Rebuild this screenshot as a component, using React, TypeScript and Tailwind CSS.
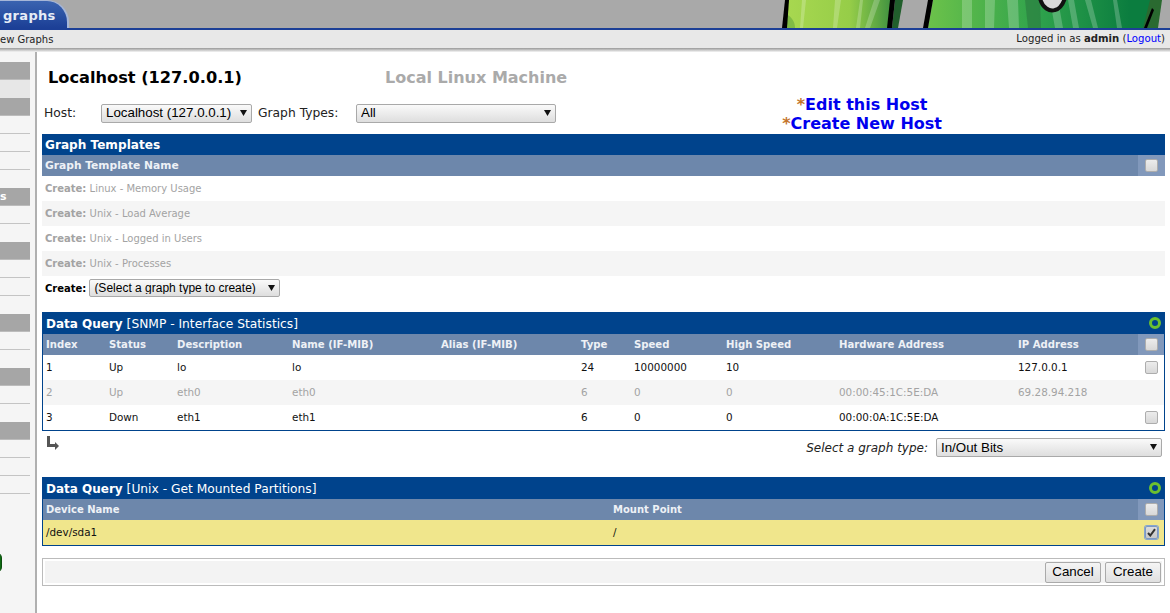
const D = '"DejaVu Sans", Verdana, sans-serif';

function Sel({ text, w, h = 'h-[19px]', tx = 'text-[13.33px]' }: { text: string; w: string; h?: string; tx?: string }) {
  return (
    <div className={`relative ${w} ${h} shrink-0`}>
      <select
        defaultValue={text}
        className={`w-full h-full appearance-none rounded-[2px] border border-[#a9a9a9] bg-gradient-to-b from-[#fafafa] to-[#dedede] pl-[4px] text-black ${tx} leading-none [font-family:'Liberation_Sans',Arial,sans-serif]`}
      >
        <option>{text}</option>
      </select>
      <svg className="absolute right-[5px] top-[6px] pointer-events-none" width="7" height="6" viewBox="0 0 7 6">
        <path d="M0 0h7L3.5 6z" fill="#111" />
      </svg>
    </div>
  );
}

function Check({ checked = false, off = false }: { checked?: boolean; off?: boolean }) {
  if (off) return null;
  return (
    <span
      className={`relative block w-[13px] h-[13px] rounded-[2px] border bg-gradient-to-b ${
        checked
          ? 'from-[#dcdcdc] to-[#c8c8c8] border-[#7b98c4] shadow-[0_0_0_1px_#86a5cf]'
          : 'from-[#ececec] to-[#d8d8d8] border-[#adadad]'
      }`}
    >
      {checked && (
        <svg className="absolute left-[1px] top-[1px]" width="9" height="9" viewBox="0 0 9 9">
          <path d="M1 5l2.3 2.5L8 1.2" fill="none" stroke="#333" strokeWidth="2" />
        </svg>
      )}
    </span>
  );
}

function Spinner() {
  return <span className="block w-[12px] h-[12px] rounded-full border-[3px] border-[#6cc02f] bg-[#00438c]" />;
}

const COLS = 'grid-cols-[63px_68px_115px_149px_140px_53px_92px_113px_179px_1fr_26px]';
const heads = ['Index', 'Status', 'Description', 'Name (IF-MIB)', 'Alias (IF-MIB)', 'Type', 'Speed', 'High Speed', 'Hardware Address', 'IP Address'];
const rows = [
  { c: ['1', 'Up', 'lo', 'lo', '', '24', '10000000', '10', '', '127.0.0.1'], off: false, bg: 'bg-white' },
  { c: ['2', 'Up', 'eth0', 'eth0', '', '6', '0', '0', '00:00:45:1C:5E:DA', '69.28.94.218'], off: true, bg: 'bg-[#f5f5f5]' },
  { c: ['3', 'Down', 'eth1', 'eth1', '', '6', '0', '0', '00:00:0A:1C:5E:DA', ''], off: false, bg: 'bg-white' },
];
const templates = ['Linux - Memory Usage', 'Unix - Load Average', 'Unix - Logged in Users', 'Unix - Processes'];

function SideRow({ kind, label }: { kind: 'gray' | 'light' | 'line' | 'blank'; label?: string }) {
  const cls =
    kind === 'gray'
      ? 'bg-[#a6a6a6] border-b border-[#bcbcbc] text-white font-bold'
      : kind === 'light'
      ? 'bg-[#e7e7e7]'
      : kind === 'line'
      ? 'border-b border-[#c4c4c4]'
      : '';
  return <div className={`h-[18px] w-[30px] text-[11px] leading-[17px] ${cls}`}>{label}</div>;
}

function Cactus() {
  return (
    <svg className="absolute left-[780px] top-0" width="390" height="28" viewBox="0 0 390 28">
      <defs>
        <linearGradient id="l" x1="0" x2="1" y1="0" y2="0">
          <stop offset="0" stopColor="#a8d850" />
          <stop offset="0.6" stopColor="#96cd48" />
          <stop offset="0.8" stopColor="#6cb245" />
          <stop offset="1" stopColor="#3f9040" />
        </linearGradient>
        <linearGradient id="r" x1="0" x2="1" y1="0" y2="0">
          <stop offset="0" stopColor="#6cc24a" />
          <stop offset="0.5" stopColor="#2ea24c" />
          <stop offset="0.9" stopColor="#0b7d3f" />
        </linearGradient>
      </defs>
      <path d="M8 0H112L109 28H6z" fill="url(#l)" />
      <path d="M6 14c6 3 9 8 9 14H6z" fill="#7fbb45" />
      <path d="M22 0h4l-3 28h-3zM55 0h6l-4 28h-4zM80 0h3l-3 28h-4zM94 0h6l-10 28h-5z" fill="#ffffff" opacity="0.22" />
      <path d="M5 0h4L7 28H2z" fill="#000" />
      <path d="M115 0h8l-5 28h-6z" fill="#215f2c" />
      <path d="M110 0h5l-3 28h-5z" fill="#000" />
      <path d="M153 0H372L365 28H148z" fill="url(#r)" />
      <path d="M148 0h5l-5 28h-5z" fill="#000" />
      <path d="M182 0h10v28h-10zM205 0h10l-1 28h-9zM227 0h11l1 28h-10zM270 0h8l5 28h-8zM288 0h6l5 28h-6zM305 0h6l7 28h-5zM333 0h4l5 28h-5z" fill="#fff" opacity="0.22" />
      <path d="M245 0h15l1 28h-13z" fill="#2c7f42" opacity="0.7" />
      <path d="M370 0h12l-4 28H363z" fill="#2a6a30" />
      <path d="M372 8l2 2-7 18h-3z" fill="#000" />
      <path d="M260 -2C262 8 270 12 275 10C280 9 283 4 285 -2" fill="#d8d8d8" stroke="#111" strokeWidth="4" />
    </svg>
  );
}

export default function App() {
  return (
    <div className="w-[1170px] h-[613px] overflow-hidden bg-white text-[11px] text-black" style={{ fontFamily: D }}>
      <div className="relative h-[28px] bg-[#a9a9a9]">
        <div className="absolute left-0 top-0 w-[69px] h-[28px] rounded-tr-[22px] bg-gradient-to-b from-[#3a63b0] to-[#1c3f96] border-t border-r-2 border-[#a5b6d8] flex items-center pl-[3px] pt-[2px] text-[13px] font-bold text-[#e6ecf7] tracking-[0.3px]">
          graphs
        </div>
        <Cactus />
      </div>
      <div className="h-[2px] bg-[#1c3f96]" />
      <div className="h-[18px] bg-[#e8e8e8] flex justify-between items-center pr-[5px] text-[#222] overflow-hidden">
        <span className="text-[10px]">ew Graphs</span>
        <span className="text-[10.15px]">
          Logged in as <b>admin</b> (<span className="text-[#0000ff]">Logout</span>)
        </span>
      </div>
      <div className="h-[4px] bg-gradient-to-b from-[#999] to-[#f5f5f5]" />
      <div className="flex h-[561px]">
        <div className="w-[37px] shrink-0 bg-[#f5f5f5] border-r-2 border-[#b0b0b0] pt-[10px] relative">
          {(
            [
              'gray', 'light', 'gray', 'line', 'line', 'line', 'blank', 'gray', 'line', 'blank', 'gray', 'line', 'line', 'blank',
              'gray', 'line', 'blank', 'gray', 'line', 'blank', 'gray', 'line', 'line', 'line',
            ] as const
          ).map((k, i) => (
            <SideRow key={i} kind={k} label={i === 7 ? 's' : undefined} />
          ))}
          <div className="absolute left-[-10px] top-[500px] w-[12px] h-[21px] rounded-full bg-[#0f6b13] border border-[#0b4d0e]" />
        </div>
        <div className="flex-1 min-w-0 pl-[5px] pr-[5px]">
          <div className="flex items-center h-[32px] mt-[10px] pl-[6px] font-bold">
            <span className="w-[337px] text-[16.2px]">Localhost (127.0.0.1)</span>
            <span className="text-[#aaaaaa] text-[16px]">Local Linux Machine</span>
          </div>
          <div className="relative flex items-center h-[20px] mt-[9px] pl-[2px] text-[12.3px] text-[#222]">
            <span className="w-[57px]">Host:</span>
            <Sel text="Localhost (127.0.0.1)" w="w-[151px]" />
            <span className="ml-[6px] w-[98px]">Graph Types:</span>
            <Sel text="All" w="w-[200px]" />
            <div className="absolute right-[223px] top-[-8px] text-right font-bold text-[16px] leading-[19px] flex flex-col items-center text-[#0000ee]">
              <span><span className="text-[#c4752c]">*</span>Edit this Host</span>
              <span><span className="text-[#c4752c]">*</span>Create New Host</span>
            </div>
          </div>

          <div className="mt-[11px]">
            <div className="h-[21px] bg-[#00438c] text-white font-bold text-[12.1px] leading-[22px] pl-[3px]">Graph Templates</div>
            <div className="h-[21px] bg-[#6d87ab] flex justify-between text-white font-bold text-[10.7px] leading-[21px] pl-[3px]">
              <span className="text-[#eef1f6]">Graph Template Name</span>
              <span className="w-[27px] h-full bg-[#8198bb] flex items-center justify-center">
                <Check />
              </span>
            </div>
            {templates.map((t, i) => (
              <div key={t} className={`h-[25px] leading-[25px] pl-[3px] text-[10px] text-[#a3a3a3] ${i % 2 ? 'bg-[#f5f5f5]' : 'bg-white'}`}>
                <b>Create:</b> {t}
              </div>
            ))}
            <div className="flex items-center h-[24px] pl-[3px] gap-[3px]">
              <b className="text-[10px]">Create:</b>
              <Sel text="(Select a graph type to create)" w="w-[191px]" h="h-[18px]" tx="text-[12px]" />
            </div>
          </div>

          <div className="mt-[12px] border border-t-0 border-[#00438c]">
            <div className="h-[22px] bg-[#00438c] text-white text-[12.25px] pl-[3px] flex items-center justify-between pr-[3px]">
              <span className="pt-[2px]"><b className="text-[12px]">Data Query</b> [SNMP - Interface Statistics]</span>
              <Spinner />
            </div>
            <div className={`grid ${COLS} h-[21px] bg-[#6d87ab] text-[#eef1f6] font-bold text-[10.1px] leading-[21px]`}>
              {heads.map(h => (
                <span key={h} className="pl-[3px] whitespace-nowrap">{h}</span>
              ))}
              <span className="bg-[#8198bb] flex items-center justify-center"><Check /></span>
            </div>
            {rows.map(r => (
              <div key={r.c[0]} className={`grid ${COLS} h-[25px] leading-[25px] text-[10.4px] ${r.bg} ${r.off ? 'text-[#a3a3a3]' : 'text-[#111]'}`}>
                {r.c.map((v, i) => (
                  <span key={i} className="pl-[3px] whitespace-nowrap">{v}</span>
                ))}
                <span className="flex items-center justify-center"><Check off={r.off} /></span>
              </div>
            ))}
          </div>

          <div className="flex justify-between h-[46px] pt-[7px] pl-[5px] pr-[3px]">
            <svg className="mt-[-2px]" width="12" height="14" viewBox="0 0 12 14">
              <path d="M0 0h3v8h5V6l4 4-4 4v-3H0z" fill="#555" />
            </svg>
            <div className="flex items-center h-[19px] gap-[8px]">
              <i className="text-[12px] text-[#222]">Select a graph type:</i>
              <Sel text="In/Out Bits" w="w-[226px]" />
            </div>
          </div>

          <div className="border border-t-0 border-[#00438c]">
            <div className="h-[22px] bg-[#00438c] text-white text-[12.25px] pl-[3px] flex items-center justify-between pr-[3px]">
              <span className="pt-[2px]"><b className="text-[12px]">Data Query</b> [Unix - Get Mounted Partitions]</span>
              <Spinner />
            </div>
            <div className="grid grid-cols-[567px_1fr_26px] h-[21px] bg-[#6d87ab] text-[#eef1f6] font-bold text-[10px] leading-[21px]">
              <span className="pl-[3px]">Device Name</span>
              <span className="pl-[3px]">Mount Point</span>
              <span className="bg-[#8198bb] flex items-center justify-center"><Check /></span>
            </div>
            <div className="grid grid-cols-[567px_1fr_26px] h-[25px] bg-[#f0e68c] text-[10.4px] leading-[25px] text-[#111]">
              <span className="pl-[3px]">/dev/sda1</span>
              <span className="pl-[3px]">/</span>
              <span className="flex items-center justify-center"><Check checked /></span>
            </div>
          </div>

          <div className="mt-[12px] h-[28px] border border-[#bbbbbb] p-[2px]">
            <div className="h-full bg-[#f3f3f3] flex justify-end items-center gap-[4px] pr-[1px]">
              {['Cancel', 'Create'].map(b => (
                <button
                  key={b}
                  className="h-[21px] px-[6px] min-w-[56px] rounded-[2px] border border-[#aaaaaa] bg-gradient-to-b from-[#f5f5f5] to-[#e0e0e0] text-[13.33px] leading-none text-black [font-family:'Liberation_Sans',Arial,sans-serif]"
                >
                  {b}
                </button>
              ))}
            </div>
          </div>
        </div>
      </div>
    </div>
  );
}
